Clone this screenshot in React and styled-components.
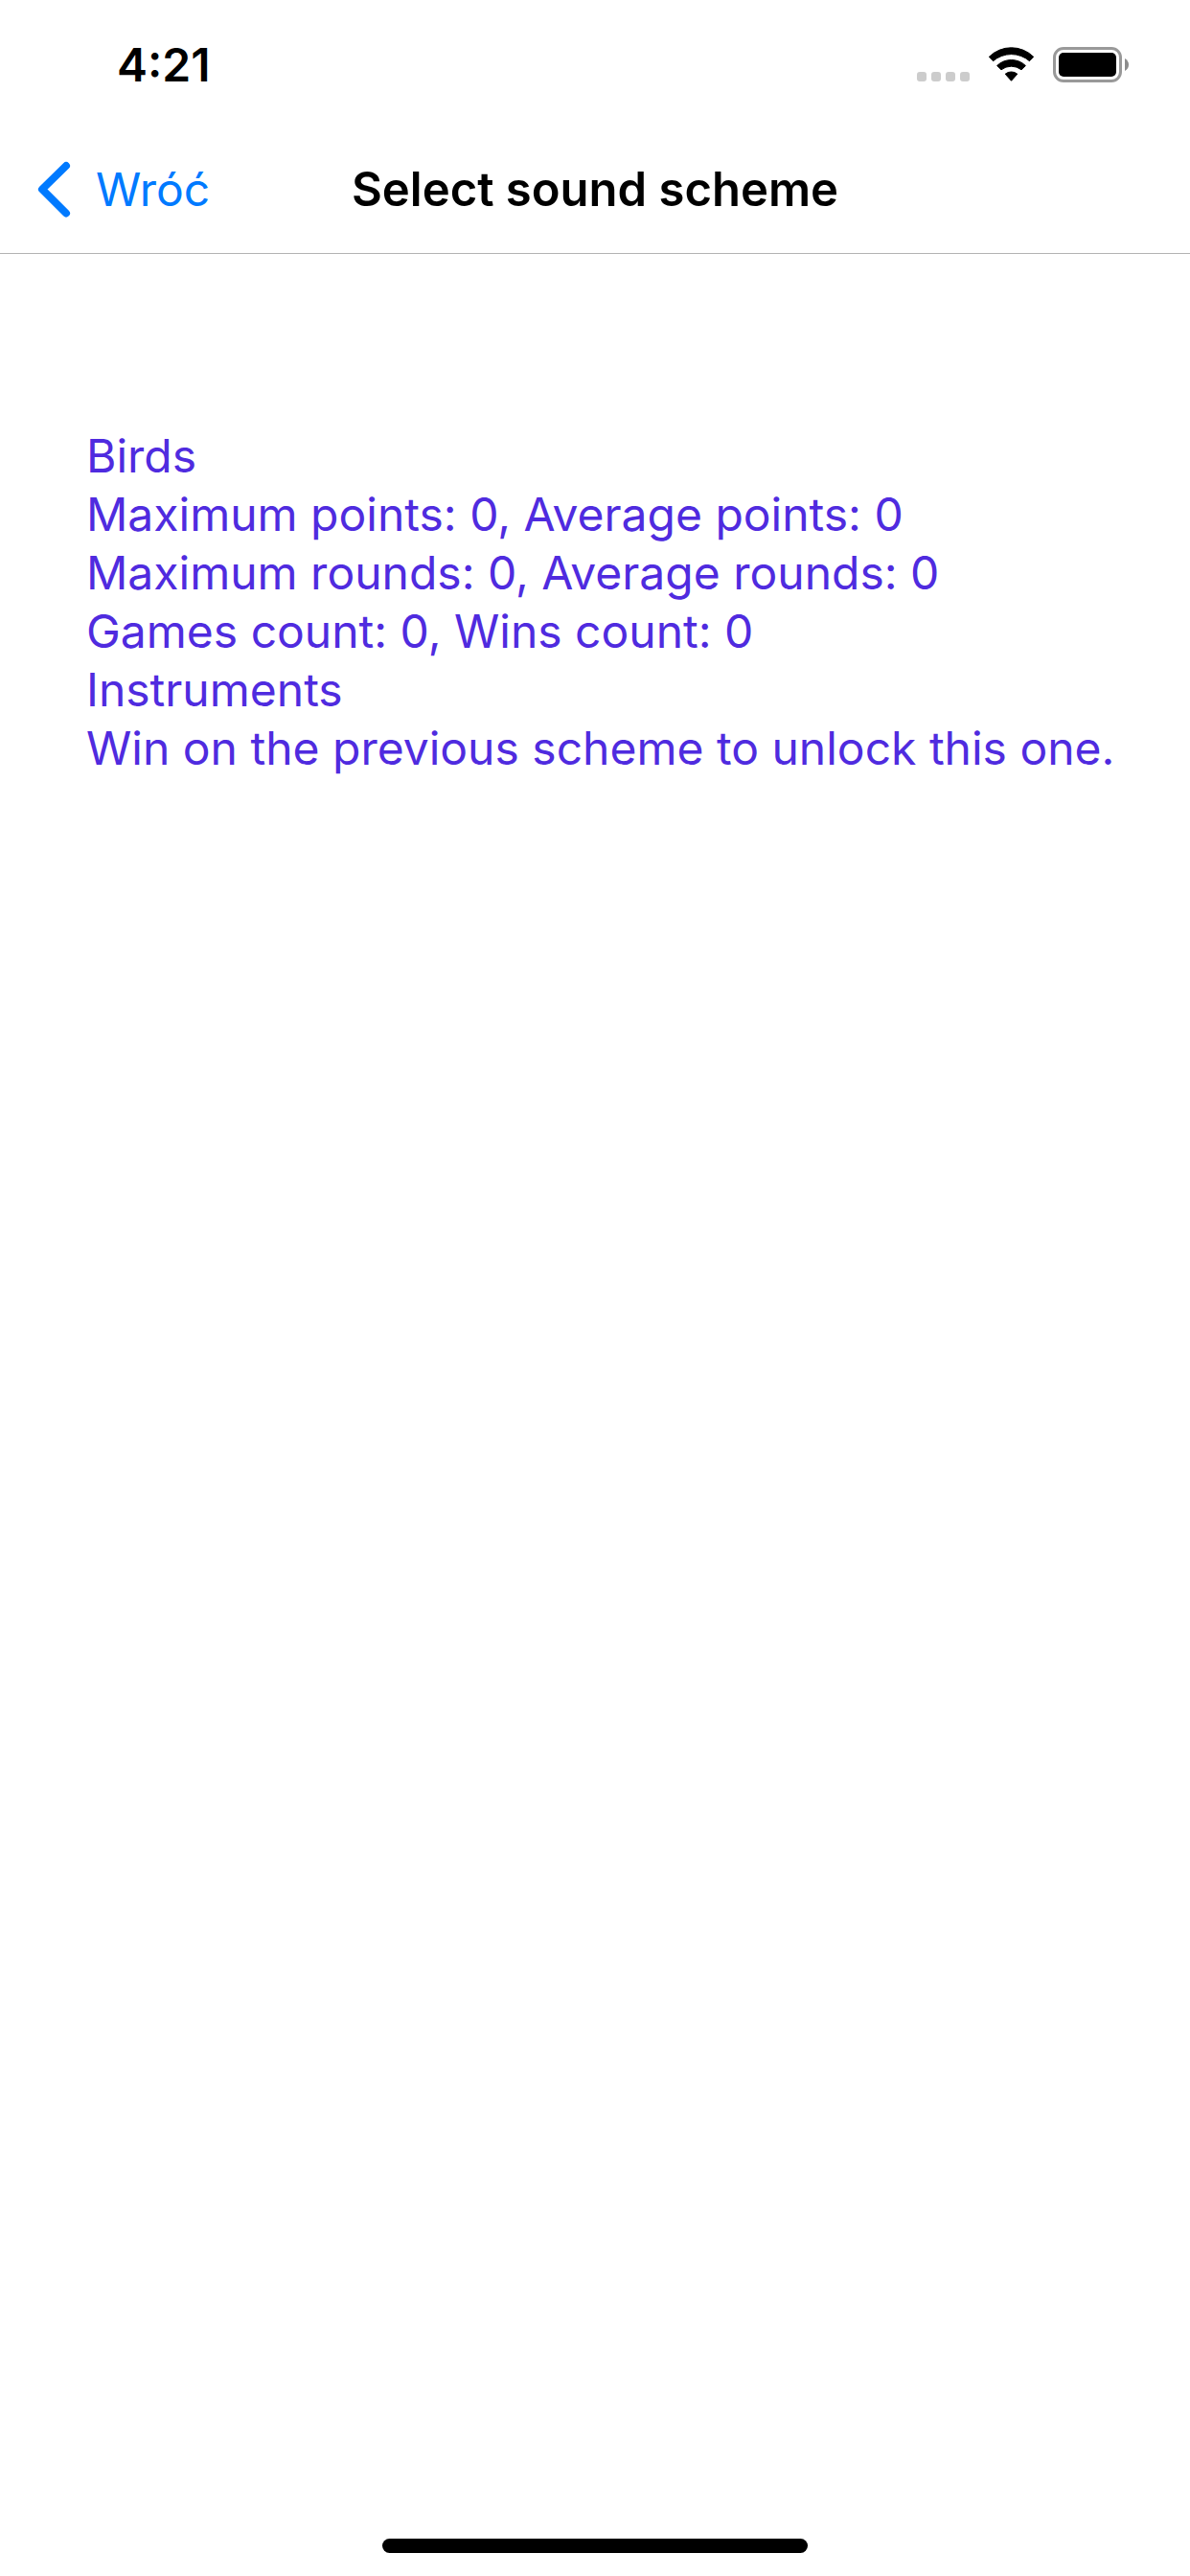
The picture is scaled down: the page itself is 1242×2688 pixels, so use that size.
import React from "react";
import styled, { createGlobalStyle } from "styled-components";

const GlobalStyle = createGlobalStyle`
  * { box-sizing: border-box; }
  body {
    margin: 0;
    background: #fff;
    color: #000;
    font-family: Inter, "Liberation Sans", sans-serif;
  }
`;

const Screen = styled.div`
  min-height: 100vh;
  display: flex;
  flex-direction: column;
`;

const StatusBar = styled.div`
  display: flex;
  align-items: center;
  justify-content: space-between;
  height: 132px;
  padding: 4px 63px 0 122px;
`;

const Time = styled.time`
  font-size: 48px;
  font-weight: 600;
  line-height: 60px;
`;

const StatusIcons = styled.div`
  display: flex;
  align-items: center;
  gap: 18px;
`;

const NavBar = styled.header`
  display: grid;
  grid-template-columns: 1fr auto 1fr;
  align-items: center;
  height: 133px;
  padding: 0 36px;
  border-bottom: 1px solid #b3b3b3;
`;

const BackButton = styled.button`
  display: flex;
  align-items: center;
  justify-self: start;
  gap: 26px;
  padding: 0;
  border: 0;
  background: none;
  color: #007aff;
  font-family: inherit;
  font-size: 48px;
  line-height: 60px;
  cursor: pointer;
`;

const Title = styled.h1`
  margin: 0;
  font-size: 49px;
  font-weight: 600;
  line-height: 60px;
`;

const Schemes = styled.main`
  flex: 1;
  padding: 180px 60px 0 90px;
`;

const Line = styled.p`
  margin: 0;
  color: #4f2bdf;
  font-size: 48px;
  line-height: 61px;
`;

const HomeIndicator = styled.div`
  align-self: center;
  width: 444px;
  height: 15px;
  margin-bottom: 24px;
  border-radius: 8px;
  background: #000;
`;

const lines = [
  "Birds",
  "Maximum points: 0, Average points: 0",
  "Maximum rounds: 0, Average rounds: 0",
  "Games count: 0, Wins count: 0",
  "Instruments",
  "Win on the previous scheme to unlock this one.",
];

function Signal() {
  return (
    <svg width="56" height="36" viewBox="0 0 56 36" fill="#ccc" aria-hidden="true">
      {[0, 15, 30, 45].map((x) => (
        <rect key={x} x={x} y="25" width="10" height="10" rx="3" />
      ))}
    </svg>
  );
}

function Wifi() {
  return (
    <svg width="50" height="38" viewBox="0 0 50 38" stroke="#000" strokeLinejoin="round" aria-hidden="true">
      <path d="M1.3 10.3A33 33 0 0 1 47.7 10.3L43.5 14.7A29 29 0 0 0 5.5 14.7Z" />
      <path d="M9.6 19.5A21.5 21.5 0 0 1 39.4 19.5L35 23.8A17 17 0 0 0 14 23.8Z" />
      <path d="M18.2 28.2A10 10 0 0 1 30.8 28.2L24.5 35.3Z" />
    </svg>
  );
}

function Battery() {
  return (
    <svg width="80" height="38" viewBox="0 0 80 38" aria-hidden="true">
      <rect x="1.5" y="1.5" width="69" height="34" rx="9.5" fill="none" stroke="#999" strokeWidth="3" />
      <rect x="6" y="6" width="60" height="25" rx="5" />
      <path d="M75 12q4 2.5 4 6.500t-4 6.500z" fill="#8c8c8c" />
    </svg>
  );
}

export default function App() {
  return (
    <Screen>
      <GlobalStyle />
      <StatusBar>
        <Time>4:21</Time>
        <StatusIcons>
          <Signal />
          <Wifi />
          <Battery />
        </StatusIcons>
      </StatusBar>
      <NavBar>
        <BackButton type="button">
          <svg width="38" height="60" viewBox="0 0 38 60" aria-hidden="true">
            <path d="M33 5L8 29.500L33 54.500" fill="none" stroke="#007aff" strokeWidth="8" strokeLinecap="round" strokeLinejoin="round" />
          </svg>
          Wróć
        </BackButton>
        <Title>Select sound scheme</Title>
      </NavBar>
      <Schemes>
        {lines.map((text) => (
          <Line key={text}>{text}</Line>
        ))}
      </Schemes>
      <HomeIndicator />
    </Screen>
  );
}
